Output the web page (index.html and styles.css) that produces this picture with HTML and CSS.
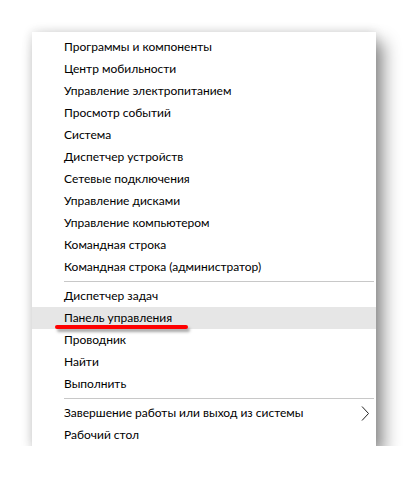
FILE: index.html
```html
<!DOCTYPE html>
<html lang="ru">
<head>
<meta charset="utf-8">
<title>Меню</title>
<link rel="stylesheet" href="styles.css">
</head>
<body>
<div class="menu">
  <div class="group">
    <div class="item">Программы и компоненты</div>
    <div class="item">Центр мобильности</div>
    <div class="item">Управление электропитанием</div>
    <div class="item">Просмотр событий</div>
    <div class="item">Система</div>
    <div class="item">Диспетчер устройств</div>
    <div class="item">Сетевые подключения</div>
    <div class="item">Управление дисками</div>
    <div class="item">Управление компьютером</div>
    <div class="item">Командная строка</div>
    <div class="item">Командная строка (администратор)</div>
  </div>
  <div class="sep"></div>
  <div class="group">
    <div class="item">Диспетчер задач</div>
    <div class="item active">Панель управления<span class="mark"></span></div>
    <div class="item">Проводник</div>
    <div class="item">Найти</div>
    <div class="item">Выполнить</div>
  </div>
  <div class="sep"></div>
  <div class="group">
    <div class="item sub">Завершение работы или выход из системы
      <svg class="chev" width="9" height="15" viewBox="0 0 9 15"><polyline points="1,0.5 7.5,7.5 1,14.5" fill="none" stroke="#222" stroke-width="1"/></svg>
    </div>
    <div class="item">Рабочий стол</div>
  </div>
</div>
</body>
</html>
```

FILE: styles.css
```css
html, body {
  margin: 0;
  padding: 0;
  background: #ffffff;
}
body {
  font-family: Lato, "Noto Sans", sans-serif;
  font-size: 12px;
  color: #000;
}
.menu {
  margin: 32px 0 0 32px;
  width: 344px;
  padding: 4px 0 0 0;
  background: #fff;
  box-shadow: 8px 10px 16px rgba(0, 0, 0, 0.42), 0 0 10px rgba(0, 0, 0, 0.14);
}
.group {
  display: flex;
  flex-direction: column;
}
.item {
  position: relative;
  height: 22px;
  line-height: 22px;
  padding-left: 32px;
  white-space: nowrap;
}
.item.active {
  background: #e6e6e6;
}
.item.sub {
  display: flex;
  justify-content: space-between;
  align-items: center;
  padding-right: 6px;
}
.chev {
  display: block;
  margin-top: 1px;
}
.sep {
  height: 1px;
  margin: 3px 2px 3px 32px;
  background: #c8c8c8;
}
.mark {
  position: absolute;
  left: 23px;
  top: 18px;
  width: 133px;
  height: 4px;
  border-radius: 2px;
  background: #ff0000;
  box-shadow: 2px 3px 3px rgba(0, 0, 0, 0.35);
}
```
